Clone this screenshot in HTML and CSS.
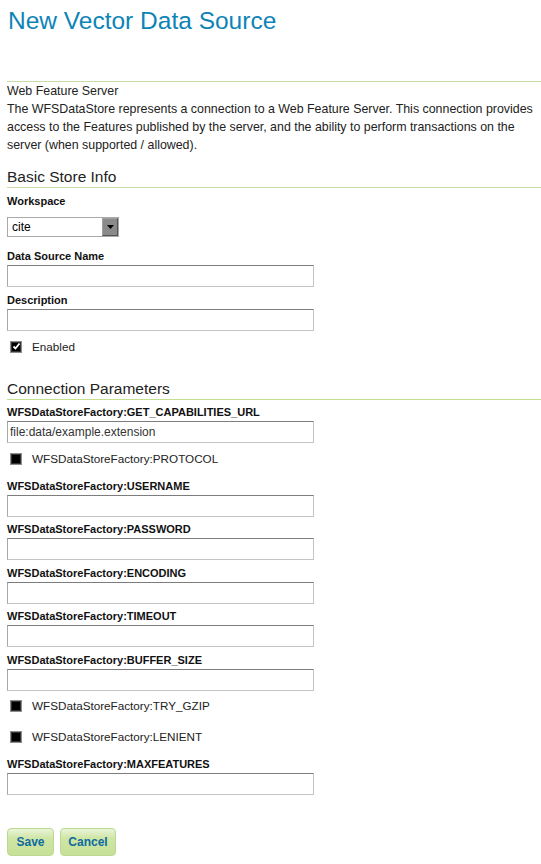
FILE: index.html
```html
<!DOCTYPE html>
<html>
<head>
<meta charset="utf-8">
<title>New Vector Data Source</title>
<link rel="stylesheet" href="styles.css">
</head>
<body>
<h1 class="title">New Vector Data Source</h1>

<div class="store-desc">
  <div>Web Feature Server</div>
  <div>The WFSDataStore represents a connection to a Web Feature Server. This connection provides access to the Features published by the server, and the ability to perform transactions on the server (when supported / allowed).</div>
</div>

<h2 class="section">Basic Store Info</h2>

<div class="field field-first">
  <div class="label">Workspace</div>
  <div class="select">
    <span class="select-value">cite</span>
    <span class="select-btn"><svg width="7" height="4" viewBox="0 0 7 4"><path d="M0 0H7L3.5 4Z" fill="#000"/></svg></span>
  </div>
</div>

<div class="field field-after-select">
  <div class="label">Data Source Name</div>
  <div class="input"></div>
</div>

<div class="field">
  <div class="label">Description</div>
  <div class="input"></div>
</div>

<div class="check-row check-enabled">
  <span class="box checked"><svg width="9" height="9" viewBox="0 0 9 9"><path d="M1.5 4.5L3.5 6.5L7.5 1.5" fill="none" stroke="#fff" stroke-width="1.8"/></svg></span>
  <span>Enabled</span>
</div>

<h2 class="section section-conn">Connection Parameters</h2>

<div class="field field-first-conn">
  <div class="label">WFSDataStoreFactory:GET_CAPABILITIES_URL</div>
  <div class="input"><span class="input-value">file:data/example.extension</span></div>
</div>

<div class="check-row check-protocol">
  <span class="box"></span>
  <span>WFSDataStoreFactory:PROTOCOL</span>
</div>

<div class="field field-after-check">
  <div class="label">WFSDataStoreFactory:USERNAME</div>
  <div class="input"></div>
</div>

<div class="field">
  <div class="label">WFSDataStoreFactory:PASSWORD</div>
  <div class="input"></div>
</div>

<div class="field">
  <div class="label">WFSDataStoreFactory:ENCODING</div>
  <div class="input"></div>
</div>

<div class="field">
  <div class="label">WFSDataStoreFactory:TIMEOUT</div>
  <div class="input"></div>
</div>

<div class="field">
  <div class="label">WFSDataStoreFactory:BUFFER_SIZE</div>
  <div class="input"></div>
</div>

<div class="check-row check-gzip">
  <span class="box"></span>
  <span>WFSDataStoreFactory:TRY_GZIP</span>
</div>

<div class="check-row check-lenient">
  <span class="box"></span>
  <span>WFSDataStoreFactory:LENIENT</span>
</div>

<div class="field field-after-check2">
  <div class="label">WFSDataStoreFactory:MAXFEATURES</div>
  <div class="input"></div>
</div>

<div class="buttons">
  <span class="btn btn-save">Save</span>
  <span class="btn btn-cancel">Cancel</span>
</div>
</body>
</html>
```

FILE: styles.css
```css
html, body {
  margin: 0;
  padding: 0;
  background: #fff;
}
body {
  padding: 0 0 0 7px;
  font-family: "Liberation Sans", Arial, sans-serif;
  font-size: 12px;
  color: #222;
}
.title {
  margin: 6px 0 45px 1px;
  font-size: 24.5px;
  line-height: 30px;
  font-weight: normal;
  color: #0d84b6;
}
.store-desc {
  border-top: 1px solid #c8dca8;
  line-height: 18px;
  font-size: 12.4px;
  color: #222;
  padding-right: 4px;
}
.section {
  margin: 13px 0 0 0;
  font-size: 15.5px;
  line-height: 20px;
  font-weight: normal;
  color: #222;
  border-bottom: 1px solid #c8dca8;
}
.section-conn {
  margin-top: 24px;
  border-bottom-color: #c3e08f;
}
.field {
  margin-top: 5.5px;
  width: 307px;
}
.field-first { margin-top: 6px; }
.field-after-select { margin-top: 12px; }
.field-first-conn { margin-top: 5px; }
.field-after-check { margin-top: 12px; }
.field-after-check2 { margin-top: 12px; }
.label {
  font-size: 11px;
  line-height: 14px;
  font-weight: bold;
  color: #111;
}
.input {
  margin-top: 2px;
  height: 22px;
  box-sizing: border-box;
  border: 1px solid #c4c4c4;
  border-top-color: #7d7d7d;
  border-left-color: #a8a8a8;
  background: #fff;
  display: flex;
  align-items: center;
  padding-left: 2px;
}
.input-value {
  font-size: 12px;
  color: #333;
}
.select {
  margin-top: 9px;
  width: 112px;
  height: 20px;
  box-sizing: border-box;
  border: 1px solid #a9a9a9;
  display: flex;
  align-items: stretch;
  background: #fff;
}
.select-value {
  flex: 1;
  padding-left: 4px;
  font-size: 12px;
  line-height: 18px;
  color: #000;
}
.select-btn {
  width: 16px;
  box-sizing: border-box;
  background: #8a8a8a;
  border: 1px solid #555;
  border-top-color: #a0a0a0;
  border-left-color: #a0a0a0;
  display: flex;
  align-items: center;
  justify-content: center;
}
.check-row {
  display: flex;
  align-items: center;
  height: 16px;
  font-size: 11.7px;
  color: #222;
}
.check-enabled { margin-top: 8px; }
.check-protocol { margin-top: 8px; }
.check-gzip { margin-top: 7px; }
.check-lenient { margin-top: 15px; }
.box {
  width: 12px;
  height: 12px;
  box-sizing: border-box;
  border: 1px solid #8d8d8d;
  background: #000;
  margin: 0 10px 0 3px;
  display: flex;
  align-items: center;
  justify-content: center;
  box-shadow: inset 0 0 0 1px #333;
}
.buttons {
  margin-top: 33px;
  display: flex;
  gap: 6px;
}
.btn {
  height: 28px;
  box-sizing: border-box;
  border: 1px solid #bcd994;
  border-radius: 4px;
  background: linear-gradient(#eaf4d8 0%, #cfe6a6 35%, #c6e096 100%);
  color: #0f6aa0;
  font-weight: bold;
  font-size: 12px;
  display: flex;
  align-items: center;
  justify-content: center;
}
.btn-save { width: 47px; }
.btn-cancel { width: 56px; }
```
